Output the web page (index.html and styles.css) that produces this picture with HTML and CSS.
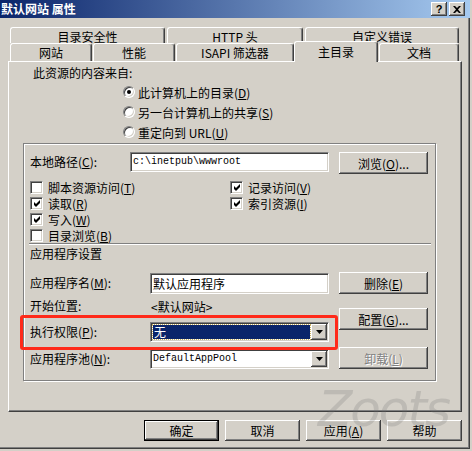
FILE: index.html
```html
<!DOCTYPE html>
<html lang="zh-CN">
  <head>
    <meta charset="UTF-8" />
    <title>默认网站 属性</title>
    <link rel="stylesheet" href="styles.css">
  </head>
  <body>
    <div class="window">
      <div class="titlebar">
        <span class="title">默认网站 属性</span>
        <div class="caption-btns">
          <span class="cap-btn help">?</span>
          <span class="cap-btn">
            <svg width="8" height="7" viewBox="0 0 8 7">
              <path d="M0 0h2l2 2 2-2h2L5 3.5 8 7H6L4 5 2 7H0l3-3.5z" fill="#000" />
            </svg>
          </span>
        </div>
      </div>

      <div class="body">
        <div class="tab-row back">
          <div class="tab t-dirsec">目录安全性</div>
          <div class="tab t-http">HTTP 头</div>
          <div class="tab t-errors">自定义错误</div>
        </div>
        <div class="tab-row front">
          <div class="tab t-site">网站</div>
          <div class="tab t-perf">性能</div>
          <div class="tab t-isapi">ISAPI 筛选器</div>
          <div class="tab t-home selected">主目录</div>
          <div class="tab t-docs">文档</div>
        </div>

        <div class="panel">
          <div class="source-label">此资源的内容来自:</div>
          <div class="radios">
            <div class="radio-row"><span class="radio checked"></span>此计算机上的目录(<u>D</u>)</div>
            <div class="radio-row"><span class="radio"></span>另一台计算机上的共享(<u>S</u>)</div>
            <div class="radio-row"><span class="radio"></span>重定向到 URL(<u>U</u>)</div>
          </div>

          <div class="frame">
            <div class="path-row">
              <span class="field-label path-label">本地路径(<u>C</u>):</span>
              <div class="textbox path-box mono">c:\inetpub\wwwroot</div>
              <button class="btn side-btn">浏览(<u>O</u>)...</button>
            </div>

            <div class="checks">
              <label class="check-item"><span class="checkbox"></span>脚本资源访问(<u>T</u>)</label>
              <label class="check-item"><span class="checkbox on"><svg width="9" height="9" viewBox="0 0 9 9"><path d="M1 3l2 2 4-4v3L3 8 1 6z" fill="#000" /></svg></span>记录访问(<u>V</u>)</label>
              <label class="check-item"><span class="checkbox on"><svg width="9" height="9" viewBox="0 0 9 9"><path d="M1 3l2 2 4-4v3L3 8 1 6z" fill="#000" /></svg></span>读取(<u>R</u>)</label>
              <label class="check-item"><span class="checkbox on"><svg width="9" height="9" viewBox="0 0 9 9"><path d="M1 3l2 2 4-4v3L3 8 1 6z" fill="#000" /></svg></span>索引资源(<u>I</u>)</label>
              <label class="check-item"><span class="checkbox on"><svg width="9" height="9" viewBox="0 0 9 9"><path d="M1 3l2 2 4-4v3L3 8 1 6z" fill="#000" /></svg></span>写入(<u>W</u>)</label>
              <span></span>
              <label class="check-item"><span class="checkbox"></span>目录浏览(<u>B</u>)</label>
            </div>

            <div class="separator"></div>
            <div class="section-title">应用程序设置</div>

            <div class="app">
              <div class="app-fields">
                <div class="app-row name-row">
                  <span class="field-label app-label">应用程序名(<u>M</u>):</span>
                  <div class="textbox app-box">默认应用程序</div>
                </div>
                <div class="app-row start-row">
                  <span class="field-label app-label">开始位置:</span>
                  <span class="start-value">&lt;默认网站&gt;</span>
                </div>
                <div class="app-row exec-row">
                  <span class="field-label app-label">执行权限(<u>P</u>):</span>
                  <div class="combo">
                    <div class="combo-value"><span class="combo-selected">无</span></div>
                    <span class="combo-arrow"><svg width="7" height="4" viewBox="0 0 7 4"><path d="M0 0h7L3.5 4z" fill="#000" /></svg></span>
                  </div>
                  <span class="marker"></span>
                </div>
                <div class="app-row pool-row">
                  <span class="field-label app-label">应用程序池(<u>N</u>):</span>
                  <div class="combo">
                    <div class="combo-value mono">DefaultAppPool</div>
                    <span class="combo-arrow"><svg width="7" height="4" viewBox="0 0 7 4"><path d="M0 0h7L3.5 4z" fill="#000" /></svg></span>
                  </div>
                </div>
              </div>
              <div class="app-buttons">
                <button class="btn side-btn">删除(<u>E</u>)</button>
                <button class="btn side-btn config-btn">配置(<u>G</u>)...</button>
                <button class="btn side-btn unload-btn" disabled>卸载(<u>L</u>)</button>
              </div>
            </div>
          </div>
        </div>

        <div class="actions">
          <button class="btn action-btn default">确定</button>
          <button class="btn action-btn">取消</button>
          <button class="btn action-btn">应用(<u>A</u>)</button>
          <button class="btn action-btn">帮助</button>
        </div>

        <span class="watermark">Zoots</span>
      </div>
    </div>
  </body>
</html>
```

FILE: styles.css
```css
body {
  margin: 0;
  background: #d4d0c8;
  font-family: "Noto Sans CJK SC", "Liberation Sans", sans-serif;
  font-size: 12px;
  color: #000;
}

u {
  text-decoration: underline;
}

.window {
  width: 470px;
  height: 449px;
  background: #d4d0c8;
  overflow: hidden;
}

/* title bar */
.titlebar {
  height: 18px;
  display: flex;
  align-items: center;
  padding: 0 5px 0 1px;
  background: linear-gradient(to right, #0a246a, #a6caf0);
  color: #fff;
  font-weight: bold;
}

.title {
  line-height: 18px;
}

.caption-btns {
  margin-left: auto;
  display: flex;
  gap: 2px;
}

.cap-btn {
  width: 16px;
  height: 14px;
  box-sizing: border-box;
  background: #d4d0c8;
  box-shadow: inset -1px -1px #404040, inset 1px 1px #fff, inset -2px -2px #808080;
  display: flex;
  align-items: center;
  justify-content: center;
  color: #000;
  font-family: "Liberation Sans", sans-serif;
  font-size: 11px;
  font-weight: bold;
  line-height: 14px;
}

.body {
  position: relative;
  height: 431px;
  box-shadow: inset -1px -1px #404040, inset -2px -2px #808080;
}

/* tabs */
.tab-row {
  display: flex;
  margin-left: 10px;
}

.tab-row.back {
  padding-top: 9px;
  height: 16px;
}

.tab-row.front {
  height: 18px;
}

.tab {
  box-sizing: border-box;
  border: 1px solid;
  border-color: #fff #404040 transparent #fff;
  border-bottom: none;
  border-radius: 3px 3px 0 0;
  box-shadow: inset -1px 0 #808080;
  background: #d4d0c8;
  text-align: center;
  white-space: nowrap;
}

.back .tab {
  height: 16px;
  padding-top: 1px;
  line-height: 16px;
}

.front .tab {
  height: 18px;
  line-height: 18px;
}

.t-dirsec { width: 155px; margin-right: 2px; }
.t-http { width: 136px; margin-right: 2px; }
.t-errors { width: 154px; }
.t-site { width: 82px; margin-right: 1px; }
.t-perf { width: 82px; margin-right: 1px; }
.t-isapi { width: 118px; }
.t-docs { width: 80px; margin-left: 1px; }

.front .tab.selected {
  position: relative;
  z-index: 1;
  width: 84px;
  height: 21px;
  margin-top: -2px;
  padding-top: 1px;
}

/* panel */
.panel {
  box-sizing: border-box;
  width: 454px;
  height: 351px;
  margin-left: 8px;
  border: 1px solid;
  border-color: #fff #404040 #404040 #fff;
  box-shadow: inset -1px -1px #808080;
}

.source-label {
  margin: 2px 0 0 24px;
  height: 18px;
  line-height: 18px;
}

.radios {
  margin-left: 114px;
}

.radio-row {
  height: 20px;
  display: flex;
  align-items: center;
  white-space: nowrap;
}

.radio {
  box-sizing: border-box;
  width: 12px;
  height: 12px;
  margin-right: 3px;
  border-radius: 50%;
  border: 1px solid;
  border-color: #808080 #fff #fff #808080;
  box-shadow: inset 1px 1px #404040, inset -1px -1px #d4d0c8;
  background: #fff;
  display: flex;
  align-items: center;
  justify-content: center;
}

.radio.checked::after {
  content: "";
  width: 4px;
  height: 4px;
  border-radius: 50%;
  background: #000;
}

.frame {
  box-sizing: border-box;
  width: 413px;
  height: 238px;
  margin: 1px 0 0 14px;
  padding: 8px 0 0 6px;
  border: 1px solid #808080;
  box-shadow: inset 1px 1px #fff, 1px 1px #fff;
}

.path-row {
  display: flex;
  height: 22px;
}

.field-label {
  line-height: 20px;
  white-space: nowrap;
}

.path-label {
  width: 100px;
}

.textbox {
  box-sizing: border-box;
  height: 20px;
  padding: 0 1px;
  border: 1px solid;
  border-color: #808080 #fff #fff #808080;
  box-shadow: inset 1px 1px #404040, inset -1px -1px #d4d0c8;
  background: #fff;
  line-height: 18px;
  white-space: nowrap;
  overflow: hidden;
}

.mono {
  font-family: "Liberation Mono", monospace;
  font-size: 10px;
}

.path-box {
  width: 199px;
  padding-left: 2px;
}

.btn {
  box-sizing: border-box;
  border: none;
  background: #d4d0c8;
  box-shadow: inset -1px -1px #404040, inset 1px 1px #fff, inset -2px -2px #808080;
  font-family: inherit;
  font-size: 12px;
  color: #000;
  padding: 0;
  white-space: nowrap;
}

.btn:disabled {
  color: #808080;
  text-shadow: 1px 1px #fff;
}

.side-btn {
  width: 89px;
  height: 22px;
}

.path-row .side-btn {
  margin-left: 10px;
}

.checks {
  margin-top: 5px;
  display: grid;
  grid-template-columns: 200px 1fr;
  grid-auto-rows: 16px;
}

.check-item {
  display: flex;
  align-items: center;
  white-space: nowrap;
}

.checkbox {
  box-sizing: border-box;
  width: 13px;
  height: 13px;
  margin-right: 5px;
  border: 1px solid;
  border-color: #808080 #fff #fff #808080;
  box-shadow: inset 1px 1px #404040, inset -1px -1px #d4d0c8;
  background: #fff;
  display: flex;
  align-items: center;
  justify-content: center;
}

.checkbox svg {
  display: block;
  margin: 1px 0 0 1px;
}

.separator {
  width: 402px;
  margin-left: -1px;
  border-top: 1px solid #808080;
  border-bottom: 1px solid #fff;
}

.section-title {
  height: 18px;
  line-height: 18px;
}

.app {
  display: flex;
  margin-top: 9px;
}

.app-fields {
  width: 299px;
}

.app-row {
  display: flex;
  align-items: center;
}

.app-label {
  width: 120px;
}

.name-row {
  height: 22px;
}

.app-box {
  width: 179px;
  height: 21px;
  padding-left: 2px;
  line-height: 19px;
}

.start-row {
  height: 20px;
  margin-top: 2px;
}

.start-value {
  margin-left: 1px;
}

.exec-row {
  position: relative;
  height: 20px;
  margin-top: 6px;
}

.pool-row {
  height: 20px;
  margin-top: 7px;
}

.combo {
  box-sizing: border-box;
  width: 179px;
  height: 20px;
  display: flex;
  border: 1px solid;
  border-color: #808080 #fff #fff #808080;
  box-shadow: inset 1px 1px #404040, inset -1px -1px #d4d0c8;
  background: #fff;
  padding: 1px;
}

.combo-value {
  flex: 1;
  padding-left: 1px;
  line-height: 16px;
  white-space: nowrap;
  overflow: hidden;
}

.combo-selected {
  display: block;
  height: 14px;
  margin: 1px 1px 1px 0;
  padding-left: 1px;
  background: #0a246a;
  outline: 1px dotted #c8b060;
  color: #fff;
  line-height: 14px;
}

.combo-arrow {
  width: 16px;
  height: 16px;
  box-sizing: border-box;
  background: #d4d0c8;
  box-shadow: inset -1px -1px #404040, inset 1px 1px #fff, inset -2px -2px #808080;
  display: flex;
  align-items: center;
  justify-content: center;
}

.marker {
  position: absolute;
  left: -10px;
  top: -7px;
  width: 318px;
  height: 35px;
  box-sizing: border-box;
  border: 3px solid #ff2a1a;
  border-radius: 3px;
  pointer-events: none;
}

.app-buttons {
  margin-left: 10px;
  display: flex;
  flex-direction: column;
}

.config-btn {
  margin-top: 14px;
}

.unload-btn {
  margin-top: 17px;
}

/* dialog buttons */
.actions {
  display: flex;
  justify-content: flex-end;
  gap: 6px;
  margin-top: 8px;
  padding-right: 8px;
}

.action-btn {
  width: 75px;
  height: 21px;
}

.action-btn.default {
  border: 1px solid #000;
}

.watermark {
  position: absolute;
  left: 318px;
  top: 362px;
  font-family: "DejaVu Sans", sans-serif;
  font-size: 50px;
  font-style: italic;
  letter-spacing: -2px;
  color: rgba(110, 110, 110, 0.22);
  pointer-events: none;
}
```
